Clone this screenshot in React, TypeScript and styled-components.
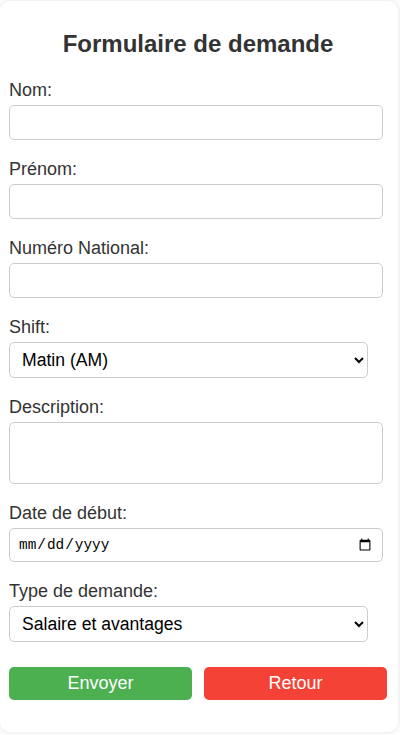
import React from "react";
import styled, { createGlobalStyle } from "styled-components";

const Global = createGlobalStyle`
  html, body { margin: 0; padding: 0; background: #ffffff; }
  body { font-family: "Liberation Sans", Arial, sans-serif; }
  * { box-sizing: border-box; }
`;

const Page = styled.div`
  padding: 1px 2px 3px 0;
`;

const Card = styled.form`
  width: 398px;
  background: #ffffff;
  border-radius: 10px;
  box-shadow: 0 0 6px rgba(0, 0, 0, 0.12);
  padding: 30px 11px 32px 9px;
  display: flex;
  flex-direction: column;
`;

const Title = styled.h2`
  margin: 0 0 25px;
  font-size: 24px;
  line-height: 26px;
  font-weight: 700;
  color: #333333;
  text-align: center;
`;

const Field = styled.div`
  display: flex;
  flex-direction: column;
  align-items: flex-start;
  margin-bottom: 21px;
`;

const Label = styled.label`
  font-size: 18px;
  line-height: 16px;
  color: #333333;
  margin-bottom: 7px;
`;

const TextInput = styled.input`
  width: 374px;
  height: 35px;
  border: 1px solid #cccccc;
  border-radius: 5px;
  padding: 8px;
  font-family: "Liberation Sans", Arial, sans-serif;
  font-size: 17.6px;
  background: #ffffff;
  color: #000000;
  outline: none;
`;

const DateInput = styled.input`
  width: 374px;
  height: 34px;
  border: 1px solid #cccccc;
  border-radius: 5px;
  padding: 0 8px;
  font-family: "Liberation Mono", "Courier New", monospace;
  font-size: 14.4px;
  background: #ffffff;
  color: #000000;
  outline: none;
`;

const Area = styled.textarea`
  width: 374px;
  height: 62px;
  border: 1px solid #cccccc;
  border-radius: 5px;
  padding: 8px;
  font-family: "Liberation Sans", Arial, sans-serif;
  font-size: 17.6px;
  resize: none;
  outline: none;
`;

const Select = styled.select`
  width: 359px;
  height: 36px;
  border: 1px solid #cccccc;
  border-radius: 5px;
  padding: 0 8px;
  font-family: "Liberation Sans", Arial, sans-serif;
  font-size: 17.6px;
  color: #000000;
  background: #ffffff;
  outline: none;
`;

const Buttons = styled.div`
  display: flex;
  gap: 12px;
  margin-top: 4px;
`;

const Button = styled.button<{ $color: string }>`
  flex: 1;
  height: 33px;
  border: none;
  border-radius: 5px;
  background: ${(p) => p.$color};
  color: #ffffff;
  font-family: "Liberation Sans", Arial, sans-serif;
  font-size: 18px;
  cursor: pointer;
`;

export default function App() {
  return (
    <Page>
      <Global />
      <Card onSubmit={(e) => e.preventDefault()}>
        <Title>Formulaire de demande</Title>
        <Field>
          <Label htmlFor="nom">Nom:</Label>
          <TextInput id="nom" type="text" />
        </Field>
        <Field>
          <Label htmlFor="prenom">Prénom:</Label>
          <TextInput id="prenom" type="text" />
        </Field>
        <Field>
          <Label htmlFor="num">Numéro National:</Label>
          <TextInput id="num" type="text" />
        </Field>
        <Field>
          <Label htmlFor="shift">Shift:</Label>
          <Select id="shift" defaultValue="AM">
            <option value="AM">Matin (AM)</option>
            <option value="PM">Soir (PM)</option>
          </Select>
        </Field>
        <Field>
          <Label htmlFor="desc">Description:</Label>
          <Area id="desc" />
        </Field>
        <Field>
          <Label htmlFor="date">Date de début:</Label>
          <DateInput id="date" type="date" />
        </Field>
        <Field>
          <Label htmlFor="type">Type de demande:</Label>
          <Select id="type" defaultValue="salaire">
            <option value="salaire">Salaire et avantages</option>
            <option value="conge">Congé</option>
          </Select>
        </Field>
        <Buttons>
          <Button type="submit" $color="#4caf50">Envoyer</Button>
          <Button type="button" $color="#f44336">Retour</Button>
        </Buttons>
      </Card>
    </Page>
  );
}
